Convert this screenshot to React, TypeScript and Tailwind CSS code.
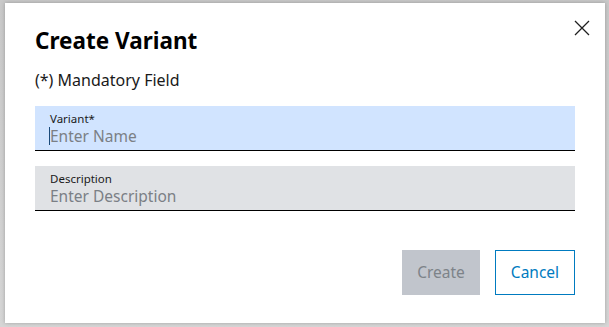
import React from "react";

const font = { fontFamily: '"Noto Sans", "Liberation Sans", sans-serif' };

const CloseIcon: React.FC = () => (
  <svg width="18" height="18" viewBox="0 0 18 18" fill="none">
    <path d="M2 2 L16 16 M16 2 L2 16" stroke="#1f1f1f" strokeWidth="1.3" />
  </svg>
);

const Field: React.FC<{ label: string; placeholder: string; active?: boolean }> = ({
  label,
  placeholder,
  active,
}) => (
  <div
    className={
      active
        ? "h-[45px] bg-[#d1e4ff] border-b border-black pl-[15px] pt-[6px]"
        : "h-[45px] bg-[#e0e2e5] border-b border-black pl-[15px] pt-[6px]"
    }
  >
    <div className="text-[11.5px] leading-[14px] text-[#1a1a1a]">{label}</div>
    <div className="flex items-center text-[15.5px] leading-[20px] text-[#7b7f85]">
      {active && <span className="w-px h-[18px] bg-[#1a4a7a] -ml-px" />}
      {placeholder}
    </div>
  </div>
);

export default function App() {
  return (
    <div
      className="w-[609px] h-[327px] bg-gradient-to-b from-[#c9c9c9] to-[#d6d6d6] pt-[3px] pl-[5px]"
      style={font}
    >
      <div className="relative w-[600px] h-[320px] bg-white shadow-[0_0_4px_rgba(0,0,0,0.25)] px-[30px] pt-[24px]">
        <button className="absolute right-[14px] top-[16px]">
          <CloseIcon />
        </button>
        <h1 className="text-[22.5px] leading-[28px] font-bold text-black">Create Variant</h1>
        <p className="mt-[15px] text-[16px] leading-[20px] text-[#1a1a1a]">(*) Mandatory Field</p>
        <div className="mt-[16px] flex flex-col gap-[15px]">
          <Field label="Variant*" placeholder="Enter Name" active />
          <Field label="Description" placeholder="Enter Description" />
        </div>
        <div className="mt-[39px] flex justify-end gap-[15px]">
          <button className="w-[78px] h-[45px] bg-[#c1c5cc] text-[15.5px] text-[#7d8389]">Create</button>
          <button className="w-[80px] h-[45px] border border-[#007bc0] text-[15.5px] text-[#007bc0]">
            Cancel
          </button>
        </div>
      </div>
    </div>
  );
}
